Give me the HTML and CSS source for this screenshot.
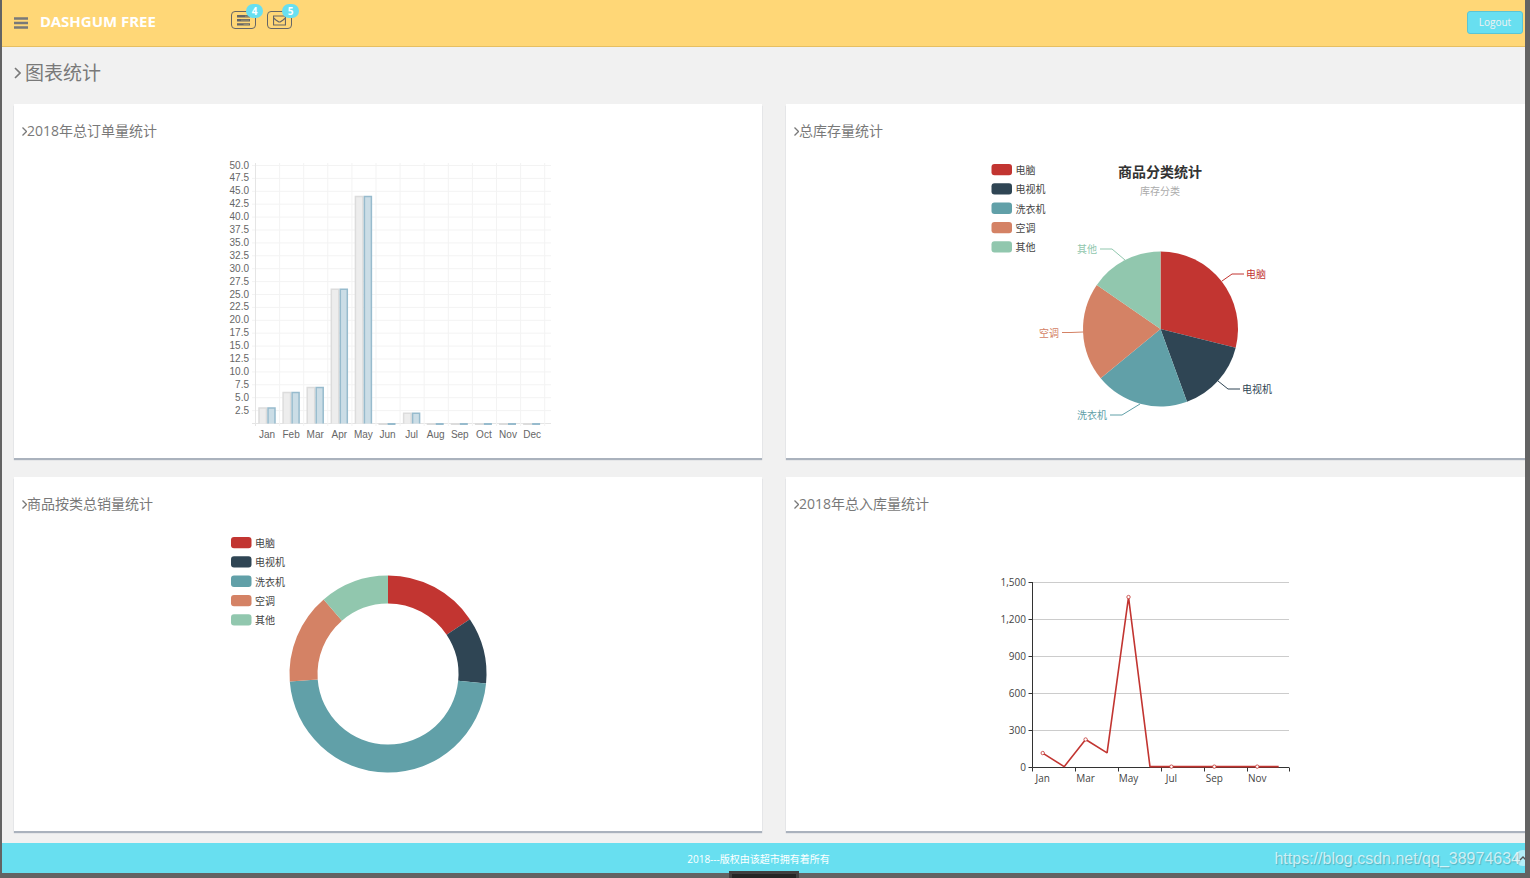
FILE: index.html
```
<!DOCTYPE html>
<html lang="zh">
<head>
  <meta charset="UTF-8">
  <meta name="viewport" content="width=device-width, initial-scale=1.0">
  <title>图表统计</title>
  <link rel="stylesheet" href="styles.css">
</head>
<body>

  <div class="page">
    <header class="header">
      <button class="toggle" type="button" aria-label="Toggle navigation">
        <svg width="14" height="12" viewBox="0 0 14 12"><path d="M0 1.500h14M0 6h14M0 10.500h14" stroke="#797979" stroke-width="2.600"/></svg>
      </button>
      <a class="logo" href="#">DASHGUM FREE</a>
      <nav class="notify">
        <a class="notify-item" href="#" aria-label="Tasks">
          <svg width="13" height="11" viewBox="0 0 13 11"><path d="M0 1.2h13M0 5.2h13M0 9.4h13" stroke="#666" stroke-width="2.4"/><path d="M8 1.2h4M4 5.2h8M6.5 9.4h5.5" stroke="#999070" stroke-width="1"/></svg>
          <span class="badge">4</span>
        </a>
        <a class="notify-item" href="#" aria-label="Messages">
          <svg width="13" height="11" viewBox="0 0 13 11"><path d="M.5 1h12v9H.5zM.5 2.8C3 5 5 7 6.500 7S10 5 12.500 2.800" fill="none" stroke="#666" stroke-width="1.200"/></svg>
          <span class="badge">5</span>
        </a>
      </nav>
      <a class="logout" href="#">Logout</a>
    </header>

    <main class="wrapper">
      <h1 class="page-title"><svg class="angle" width="7" height="12" viewBox="0 0 7 12"><path d="M1 1l5 5-5 5" stroke-width="1.600"/></svg>图表统计</h1>

      <div class="panels">
        <section class="panel">
          <h2 class="panel-title"><svg class="angle" width="5" height="9" viewBox="0 0 5 9"><path d="M.5.500l4 4-4 4" stroke-width="1.300"/></svg>2018年总订单量统计</h2>
          <svg class="chart" id="orders" width="322" height="282"></svg>
        </section>
        <section class="panel">
          <h2 class="panel-title"><svg class="angle" width="5" height="9" viewBox="0 0 5 9"><path d="M.5.500l4 4-4 4" stroke-width="1.300"/></svg>总库存量统计</h2>
          <svg class="chart" id="stock" width="322" height="282"></svg>
        </section>
        <section class="panel">
          <h2 class="panel-title"><svg class="angle" width="5" height="9" viewBox="0 0 5 9"><path d="M.5.500l4 4-4 4" stroke-width="1.300"/></svg>商品按类总销量统计</h2>
          <svg class="chart" id="sales" width="322" height="282"></svg>
        </section>
        <section class="panel">
          <h2 class="panel-title"><svg class="angle" width="5" height="9" viewBox="0 0 5 9"><path d="M.5.500l4 4-4 4" stroke-width="1.300"/></svg>2018年总入库量统计</h2>
          <svg class="chart" id="incoming" width="322" height="282"></svg>
        </section>
      </div>
    </main>

    <footer class="footer">
      <span class="copyright">2018---版权由该超市拥有着所有</span>
      <a class="go-top" href="#" aria-label="Top"><svg width="8" height="6" viewBox="0 0 8 6"><path d="M1 5l3-3 3 3" fill="none" stroke="#555" stroke-width="1.300"/></svg></a>
    </footer>
    <span class="watermark">https://blog.csdn.net/qq_38974634</span>
  </div>
  <div class="dock"></div>

  <script src="charts.js"></script>
</body>
</html>
```
FILE: styles.css
```
body, html {
  margin: 0;
  padding: 0;
  background-color: #636363;
}

body {
  position: relative;
  padding-bottom: 5px;
  font-family: 'Open Sans', 'Noto Sans CJK SC', sans-serif;
  font-size: 10px;
  color: #797979;
}

a {
  text-decoration: none;
}

.page {
  position: relative;
  margin: 0 5px 0 2px;
  background-color: #f1f1f1;
  overflow: hidden;
}

/* header */
.header {
  display: flex;
  align-items: flex-start;
  box-sizing: border-box;
  height: 47px;
  padding: 11px 2px 0 12px;
  background-color: #ffd777;
  border-bottom: 1px solid #e6bf62;
}

.toggle {
  display: flex;
  margin: 6px 12px 0 0;
  padding: 0;
  background: none;
  border: none;
  cursor: pointer;
}

.logo {
  width: 191px;
  color: #fff;
  font-family: 'Noto Sans', sans-serif;
  font-size: 15px;
  font-weight: bold;
  line-height: 21px;
}

.notify {
  display: flex;
  gap: 11px;
}

.notify-item {
  position: relative;
  display: flex;
  align-items: center;
  justify-content: center;
  width: 23px;
  height: 16px;
  border: 1px solid #666;
  border-radius: 4px;
}

.badge {
  position: absolute;
  top: -8px;
  right: -8px;
  width: 17px;
  background-color: #68dff0;
  border-radius: 8px;
  color: #fff;
  font-weight: bold;
  line-height: 14px;
  text-align: center;
}

.logout {
  box-sizing: border-box;
  width: 56px;
  margin-left: auto;
  background-color: #68dff0;
  border: 1px solid #5bc5d4;
  border-radius: 3px;
  color: #f2f2f2;
  line-height: 21px;
  text-align: center;
}

/* content */
.wrapper {
  padding: 0 0 12px 12px;
}

.angle {
  fill: none;
  stroke: #797979;
}

.page-title {
  display: flex;
  align-items: center;
  gap: 4px;
  margin: 0;
  padding: 11px 0 16px;
  font-size: 19px;
  font-weight: normal;
  line-height: 30px;
}

/* the right column runs past the page edge */
.panels {
  display: grid;
  grid-template-columns: 1fr 1fr;
  gap: 19px 24px;
  margin-right: -9px;
}

.panel {
  display: flex;
  flex-direction: column;
  padding: 17px 8px 15px;
  background-color: #fff;
  box-shadow: 0 2px 1px #aab2bd;
}

.panel-title {
  display: flex;
  align-items: center;
  margin: 0 0 20px;
  font-size: 14px;
  font-weight: normal;
  line-height: 20px;
}

.chart {
  align-self: center;
  overflow: visible;
}

/* charts */
.bar-label {
  font-family: 'Liberation Sans', sans-serif;
  fill: #666;
}

.axis-label, .legend-label {
  fill: #444;
}

.chart-title {
  font-size: 14px;
  font-weight: bold;
  fill: #333;
}

.chart-subtitle {
  fill: #aaa;
}

/* footer */
.footer {
  display: flex;
  align-items: center;
  height: 30px;
  background-color: #68dff0;
}

.copyright {
  flex: 1;
  color: #fff;
  text-align: center;
}

.go-top {
  display: flex;
  align-items: center;
  justify-content: center;
  width: 16px;
  height: 16px;
  margin-right: -6px;
  background-color: rgba(255, 255, 255, 0.5);
  border-radius: 50%;
}

.watermark {
  position: absolute;
  right: 5px;
  bottom: 4px;
  color: rgba(255, 255, 255, 0.7);
  font-family: 'Liberation Sans', sans-serif;
  font-size: 16px;
  line-height: 20px;
  text-shadow: 1px 1px 1px rgba(0, 0, 0, 0.2);
}

.dock {
  position: absolute;
  left: 50%;
  bottom: 0;
  width: 64px;
  height: 4px;
  margin-left: -36px;
  background-color: #252525;
  border: 3px solid #404040;
  border-bottom: none;
}
```
FILE: charts.js
```
const months = ['Jan', 'Feb', 'Mar', 'Apr', 'May', 'Jun', 'Jul', 'Aug', 'Sep', 'Oct', 'Nov', 'Dec'];
const categories = ['电脑', '电视机', '洗衣机', '空调', '其他'];
const colors = ['#c23531', '#2f4554', '#61a0a8', '#d48265', '#91c7ae'];

function line(x1, y1, x2, y2, color) {
  return `<line x1="${x1}" y1="${y1}" x2="${x2}" y2="${y2}" stroke="${color}"/>`;
}

function text(x, y, label, cls, anchor, color) {
  const fill = color ? ` fill="${color}"` : '';
  return `<text x="${x}" y="${y}" class="${cls}" text-anchor="${anchor}"${fill}>${label}</text>`;
}

// point on a circle, angle in degrees clockwise from the top
function polar(cx, cy, r, angle) {
  const a = angle * Math.PI / 180;
  return (cx + r * Math.sin(a)) + ' ' + (cy - r * Math.cos(a));
}

function slices(cx, cy, outer, inner, stops) {
  return colors.map((color, i) => {
    const a = stops[i], b = stops[i + 1];
    const large = b - a > 180 ? 1 : 0;
    return `<path fill="${color}" d="M${polar(cx, cy, outer, a)}A${outer} ${outer} 0 ${large} 1 ${polar(cx, cy, outer, b)}` +
      `L${polar(cx, cy, inner, b)}A${inner} ${inner} 0 ${large} 0 ${polar(cx, cy, inner, a)}Z"/>`;
  }).join('');
}

function legend(x, y) {
  return categories.map((name, i) => {
    const top = y + i * 19.3;
    return `<rect x="${x}" y="${top}" width="20.500" height="11.300" rx="3" fill="${colors[i]}"/>` +
      text(x + 24, top + 10, name, 'legend-label', 'start');
  }).join('');
}

function drawBars() {
  const values = [3, 6, 7, 26, 44, 0, 2, 0, 0, 0, 0, 0];
  const zero = 262.5, left = 28.5, step = 24.1, unit = 5.16;
  let out = '';
  for (let i = 0; i <= 20; i++) {
    const y = zero - i * 12.9;
    out += line(25, y, 324, y, i ? '#f3f3f3' : '#e5e5e5');
    if (i) out += text(22, y + 3, (i * 2.5).toFixed(1), 'bar-label', 'end');
  }
  for (let i = 0; i <= 12; i++) {
    out += line(left + i * step, 2, left + i * step, 265, i ? '#f3f3f3' : '#e5e5e5');
  }
  values.forEach((v, i) => {
    const x = left + i * step + 3.5, h = v * unit;
    if (v) {
      out += `<path d="M${x} ${zero}v${-h}h7.500v${h}" fill="#ededed" stroke="#dcdcdc" stroke-width="1.500"/>`;
      out += `<path d="M${x + 9} ${zero}v${-h}h7v${h}" fill="#cbdde6" stroke="#97bbcd" stroke-width="1.500"/>`;
    } else {
      out += `<rect x="${x - 1}" y="262" width="9" height="2" fill="#dcdcdc"/>`;
      out += `<rect x="${x + 8}" y="262" width="8" height="2" fill="#97bbcd"/>`;
    }
    out += text(x + 8, 277, months[i], 'bar-label', 'middle');
  });
  document.getElementById('orders').innerHTML = out;
}

function drawPie() {
  const leaders = [
    { path: '223,120 233,113 245,113', x: 247, y: 117, anchor: 'start' },
    { path: '219,220 229,228 241,228', x: 243, y: 232, anchor: 'start' },
    { path: '141,243 123,254 111,254', x: 108, y: 258, anchor: 'end' },
    { path: '84,171 72,171.500 63,171.500', x: 60, y: 176, anchor: 'end' },
    { path: '126,99 113,88 101,88', x: 98, y: 92, anchor: 'end' }
  ];
  let out = legend(-7.5, 3);
  out += text(161, 16, '商品分类统计', 'chart-title', 'middle');
  out += text(161, 34, '库存分类', 'chart-subtitle', 'middle');
  leaders.forEach((l, i) => {
    out += `<polyline points="${l.path}" fill="none" stroke="${colors[i]}"/>`;
    out += text(l.x, l.y, categories[i], 'slice-label', l.anchor, colors[i]);
  });
  out += slices(161.5, 168, 77.5, 0, [0, 104, 160, 230.5, 304.7, 360]);
  document.getElementById('stock').innerHTML = out;
}

function drawDonut() {
  document.getElementById('sales').innerHTML =
    legend(4, 3) + slices(161, 140, 98.5, 70.5, [0, 56.2, 95.5, 265.6, 319.2, 360]);
}

function drawLine() {
  const values = [113, 3, 223, 115, 1378, 3, 3, 3, 3, 3, 3, 3];
  const left = 33.5, zero = 233.5, step = 21.45;
  const px = i => left - 0.5 + (i + 0.5) * step;
  const py = v => zero - 0.5 - v * 185 / 1500;
  let out = '';
  for (let i = 0; i <= 5; i++) {
    const y = zero - i * 37;
    out += line(left, y, 290, y, i ? '#ccc' : '#333');
    out += line(left - 4, y, left, y, '#333');
    out += text(27, y + 3, (i * 300).toLocaleString('en-US'), 'axis-label', 'end');
  }
  out += line(left, 48, left, zero, '#333');
  for (let i = 0; i <= 12; i += 2) {
    const x = Math.floor(left + i * step) + 0.5;
    out += line(x, zero, x, zero + 4, '#333');
    if (i < 12) out += text(px(i), 248, months[i], 'axis-label', 'middle');
  }
  const points = values.map((v, i) => px(i) + ',' + py(v)).join(' ');
  out += `<polyline points="${points}" fill="none" stroke="#c23531" stroke-width="1.600" stroke-linejoin="bevel"/>`;
  for (let i = 0; i < 12; i += 2) {
    out += `<circle cx="${px(i)}" cy="${py(values[i])}" r="1.700" fill="#fff" stroke="#c23531" stroke-width=".8"/>`;
  }
  document.getElementById('incoming').innerHTML = out;
}

drawBars();
drawPie();
drawDonut();
drawLine();
```
